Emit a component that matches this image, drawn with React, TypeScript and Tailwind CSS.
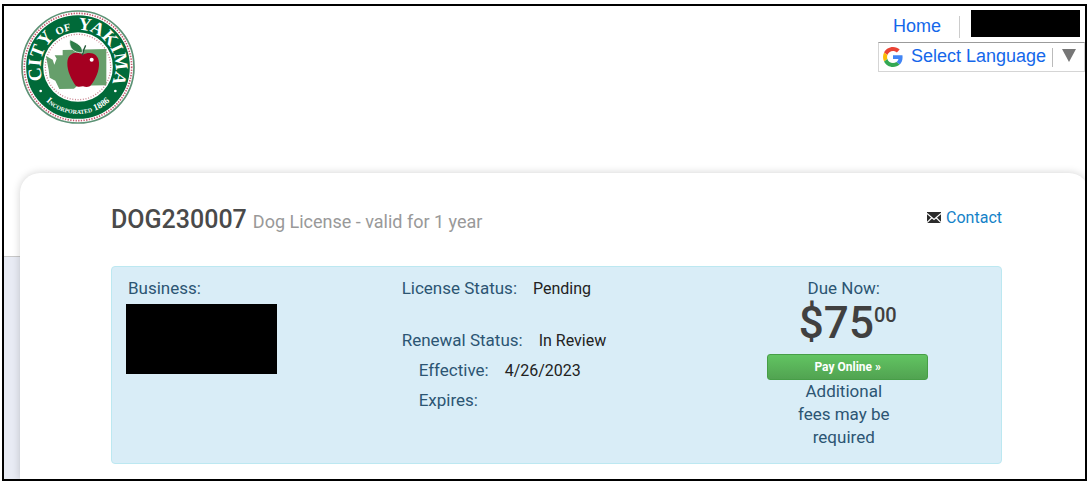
import React from "react";

function Seal() {
  return (
    <svg viewBox="63 32 342 342" className="size-[114px] shrink-0" role="img" aria-label="City of Yakima">
      <defs>
        <path id="sealTop" d="M 137 259 A 112 112 0 1 1 331 259" />
        <path id="sealBottom" d="M 101.500 251 A 141 141 0 0 0 366.500 251" />
      </defs>
      <circle cx="234" cy="203" r="168" fill="#fff" stroke="#5c9275" strokeWidth="5" />
      <circle cx="234" cy="203" r="161" fill="none" stroke="#c4566c" strokeWidth="5" strokeDasharray="4 4" />
      <circle cx="234" cy="203" r="130" fill="none" stroke="#006a39" strokeWidth="51" />
      <circle cx="234" cy="203" r="98" fill="none" stroke="#c9808d" strokeWidth="4" strokeDasharray="3 5" />
      <path
        d="M138 170 L158 181 L163 196 L170 178 L164 168 L188 168 L188 152 L319 149 L319 258 L232 259 L222 268 L178 269 L166 244 L149 235 L146 212 Z"
        fill="#669f6b"
      />
      <path
        d="M248 166 C228 154 203 162 202 190 C201 216 215 240 226 258 C232 264 240 263 249 261 C259 264 268 264 273 257 C287 238 298 216 297 190 C295 161 269 155 248 166 Z"
        fill="#a50021"
      />
      <path d="M247 168 C249 158 251 149 257 138" fill="none" stroke="#24573a" strokeWidth="4" />
      <path d="M210 121 C205 145 222 162 247 160 C249 138 231 132 210 121 Z" fill="#2f7d49" stroke="#fff" strokeWidth="2" />
      <circle cx="275" cy="181" r="6" fill="#fff" />
      <circle cx="122" cy="275" r="4" fill="#fff" />
      <circle cx="346" cy="275" r="4" fill="#fff" />
      <g fill="#fff" fontFamily="'Liberation Serif', serif" fontWeight="700" textAnchor="middle">
        <text fontSize="56">
          <textPath href="#sealTop" startOffset="19%">CITY</textPath>
        </text>
        <text fontSize="32">
          <textPath href="#sealTop" startOffset="41%">OF</textPath>
        </text>
        <text fontSize="54">
          <textPath href="#sealTop" startOffset="74%">YAKIMA</textPath>
        </text>
        <text fontSize="27" style={{ fontVariant: "small-caps" }}>
          <textPath href="#sealBottom" startOffset="50%">Incorporated 1886</textPath>
        </text>
      </g>
    </svg>
  );
}

function GoogleMark() {
  return (
    <svg viewBox="0 0 48 48" className="size-5 shrink-0" aria-hidden="true">
      <path fill="#EA4335" d="M24 9.500c3.540 0 6.710 1.220 9.210 3.600l6.850-6.850C35.900 2.380 30.470 0 24 0 14.620 0 6.510 5.380 2.560 13.220l7.980 6.190C12.430 13.720 17.740 9.500 24 9.500z" />
      <path fill="#4285F4" d="M46.980 24.550c0-1.570-.15-3.090-.38-4.550H24v9.020h12.940c-.58 2.960-2.260 5.480-4.780 7.180l7.730 6c4.510-4.180 7.090-10.360 7.090-17.650z" />
      <path fill="#FBBC05" d="M10.530 28.590c-.48-1.450-.76-2.990-.76-4.590s.27-3.140.76-4.590l-7.980-6.190C.92 16.460 0 20.120 0 24c0 3.880.92 7.540 2.560 10.780l7.970-6.190z" />
      <path fill="#34A853" d="M24 48c6.480 0 11.930-2.130 15.890-5.810l-7.730-6c-2.150 1.450-4.920 2.300-8.160 2.300-6.260 0-11.570-4.220-13.470-9.910l-7.980 6.190C6.510 42.620 14.620 48 24 48z" />
    </svg>
  );
}

function Envelope() {
  return (
    <svg viewBox="0 0 14 11" className="h-[11px] w-[14px] shrink-0" aria-hidden="true">
      <rect width="14" height="11" fill="#2b2b2b" />
      <path d="M0 1.500 L7 7.500 L14 1.500 M0 10.500 L4.800 5.800 M14 10.500 L9.200 5.800" fill="none" stroke="#fff" strokeWidth="1.200" />
    </svg>
  );
}

function Field({ label, value }: { label: string; value?: string }) {
  return (
    <div className="flex gap-4">
      <dt>{label}</dt>
      <dd className="text-base leading-[23px] text-[#222]">{value}</dd>
    </div>
  );
}

export default function App() {
  return (
    <div className="flex h-screen flex-col bg-white px-[2px] pt-1 pb-[3px] font-['Roboto',sans-serif]">
      <div className="flex flex-1 flex-col overflow-hidden border-2 border-black">
        <header className="flex h-[167px] shrink-0 items-start justify-between pl-[17px] pt-1">
          <Seal />
          <div className="flex flex-col items-end font-['Liberation_Sans',sans-serif] text-lg leading-6 text-[#1467ea]">
            <nav className="mr-[5px] flex items-start">
              <a href="#home" className="pt-1">Home</a>
              <span className="mt-[6px] ml-[18px] h-[22px] w-px bg-[#ccc]" />
              <span className="ml-[11px] h-[27px] w-[109px] bg-black" />
            </nav>
            <button
              type="button"
              className="mt-1 flex h-[30px] items-center border border-[#d5d5d5] border-t-[#9b9b9b] pr-2 pl-1"
            >
              <GoogleMark />
              <span className="ml-2 pb-[2px]">Select Language</span>
              <span className="ml-[6px] h-[19px] w-px bg-[#bbb]" />
              <svg viewBox="0 0 14 13" className="mb-1 ml-[9px] h-[13px] w-[14px]" aria-hidden="true">
                <path d="M0 0H14L7 13Z" fill="#767676" />
              </svg>
            </button>
          </div>
        </header>

        <div className="flex flex-1 flex-col bg-[linear-gradient(#fff_83px,#c8c8c8_83px,#c8c8c8_84px,#e8ebf4_84px)] pl-4">
          <main className="-mr-1 flex-1 rounded-t-[20px] bg-white pr-[87px] pl-[91px] shadow-[0_0_8px_rgba(0,0,0,0.18)]">
            <div className="flex items-start justify-between pt-[31px]">
              <h1 className="flex items-baseline gap-[6px] text-[25px] leading-8 font-medium text-[#4a4a4a]">
                DOG230007
                <small className="text-lg leading-8 font-normal text-[#999]">Dog License - valid for 1 year</small>
              </h1>
              <a href="#contact" className="flex items-center gap-[5px] text-base leading-[27px] text-[#1482c8]">
                <Envelope />
                Contact
              </a>
            </div>

            <section className="mt-7 grid h-[198px] grid-cols-[274fr_366fr_218fr] rounded border border-[#bce8f1] bg-[#d9edf7] px-4 pt-[10px] text-[17px] leading-[23px] text-[#2c5573]">
              <div>
                <p>Business:</p>
                <div className="-ml-[2px] mt-1 h-[70px] w-[151px] bg-black" />
              </div>
              <dl>
                <Field label="License Status:" value="Pending" />
                <div className="mt-[29px] flex flex-col gap-[7px]">
                  <Field label="Renewal Status:" value="In Review" />
                  <div className="flex flex-col gap-[7px] pl-[17px]">
                    <Field label="Effective:" value="4/26/2023" />
                    <Field label="Expires:" />
                  </div>
                </div>
              </dl>
              <div className="flex w-[161px] flex-col items-center text-center">
                <p className="pr-2">Due Now:</p>
                <p className="flex items-start text-[44px] leading-[46px] font-medium text-[#404040]">
                  <span>$75</span>
                  <span className="pt-1 text-xl leading-[22px]">00</span>
                </p>
                <button
                  type="button"
                  className="mt-2 h-[26px] w-full rounded-[3px] border border-[#479e47] bg-linear-to-b from-[#62c462] to-[#51a351] text-xs font-bold text-white"
                >
                  Pay Online »
                </button>
                <p className="w-[108px] pr-2">Additional fees may be required</p>
              </div>
            </section>
          </main>
        </div>
      </div>
    </div>
  );
}
